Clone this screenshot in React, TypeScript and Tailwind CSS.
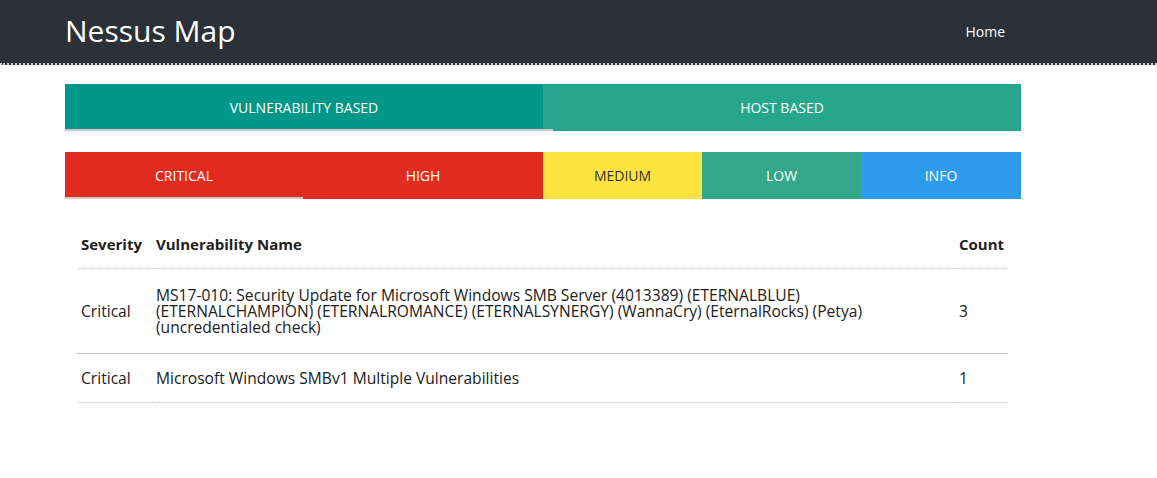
const rows = [
  {
    severity: 'Critical',
    name: 'MS17-010: Security Update for Microsoft Windows SMB Server (4013389) (ETERNALBLUE) (ETERNALCHAMPION) (ETERNALROMANCE) (ETERNALSYNERGY) (WannaCry) (EternalRocks) (Petya) (uncredentialed check)',
    count: 3,
    border: 'border-solid',
    pad: 'py-[18px]',
  },
  {
    severity: 'Critical',
    name: 'Microsoft Windows SMBv1 Multiple Vulnerabilities',
    count: 1,
    border: 'border-dotted',
    pad: 'py-[16px]',
  },
];

export default function App() {
  return (
    <div className="min-h-screen bg-white font-['Open_Sans',sans-serif] text-[#212121]">
      <nav className="h-[65px] bg-[#2b3139] border-b-2 border-dotted border-[#d2cbc4]">
        <div className="mx-[65px] flex h-full items-center justify-between">
          <span className="text-[30px] leading-none text-white pb-[2px]">Nessus Map</span>
          <span className="mr-[87px] text-[14px] text-white">Home</span>
        </div>
      </nav>

      <div className="ml-[65px] w-[956px] pt-[19px]">
        <div className="flex h-[47px] text-[14px] uppercase text-white">
          <div className="relative flex w-1/2 items-center justify-center bg-[#009688]">
            Vulnerability Based
            <div className="absolute bottom-0 left-0 h-[2px] w-[488px] bg-[#d2cbc4]" />
          </div>
          <div className="flex w-1/2 items-center justify-center bg-[#26a68c]">Host Based</div>
        </div>

        <div className="mt-[21px] flex h-[47px] text-[14px] uppercase">
          <div className="relative flex w-[238px] items-center justify-center bg-[#e12b20] text-white">
            Critical
            <div className="absolute bottom-0 left-0 h-[2px] w-full bg-[#d2cbc4]" />
          </div>
          <div className="flex w-[240px] items-center justify-center bg-[#e12b20] text-white">High</div>
          <div className="flex w-[159px] items-center justify-center bg-[#fce340] text-[#333]">Medium</div>
          <div className="flex w-[159px] items-center justify-center bg-[#32a78a] text-white">Low</div>
          <div className="flex w-[160px] items-center justify-center bg-[#2f9bef] text-white">Info</div>
        </div>

        <table className="ml-[12px] mt-[21px] w-[931px] border-collapse text-[15.6px] text-[#212121]">
          <thead>
            <tr className="border-b border-dotted border-[#c9c3bd]">
              <th className="h-[48px] w-[75px] pl-[4px] text-left text-[15px] font-bold">Severity</th>
              <th className="pl-[4px] text-left text-[15px] font-bold">Vulnerability Name</th>
              <th className="w-[52px] pl-[3px] text-left text-[15px] font-bold">Count</th>
            </tr>
          </thead>
          <tbody>
            {rows.map((r, i) => (
              <tr key={i} className={`border-b ${r.border} border-[#c9c3bd]`}>
                <td className={`${r.pad} pl-[4px] leading-[16px] align-middle`}>{r.severity}</td>
                <td className={`${r.pad} pl-[4px] pr-[70px] leading-[16px] align-middle`}>{r.name}</td>
                <td className={`${r.pad} pl-[3px] leading-[16px] align-middle`}>{r.count}</td>
              </tr>
            ))}
          </tbody>
        </table>
      </div>
    </div>
  );
}
